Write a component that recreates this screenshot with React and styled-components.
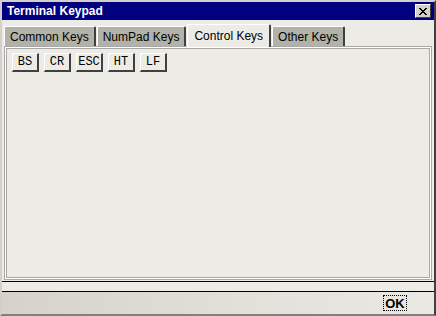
import React from 'react';
import styled, { createGlobalStyle } from 'styled-components';

const GlobalStyle = createGlobalStyle`
    html, body {
        margin: 0;
        padding: 0;
        background: #ECE9E3;
    }
    * {
        box-sizing: border-box;
    }
`;

const Frame = styled.div`
    width: 436px;
    height: 316px;
    display: flex;
    flex-direction: column;
    background: #ECEBE6;
    border-top: 2px solid #D4D0C8;
    border-left: 2px solid #D4D0C8;
    border-right: 2px solid #404040;
    border-bottom: 2px solid #808080;
    font-family: "Liberation Sans", Arial, sans-serif;
`;

const TitleBar = styled.div`
    height: 18px;
    flex: none;
    background: #000080;
    color: #fff;
    display: flex;
    align-items: center;
    justify-content: space-between;
    padding: 0 3px 0 5px;
    font-weight: bold;
    font-size: 12px;
`;

const CloseButton = styled.div`
    width: 16px;
    height: 14px;
    background: #D4D0C8;
    border-top: 1px solid #fff;
    border-left: 1px solid #fff;
    border-right: 1px solid #404040;
    border-bottom: 1px solid #404040;
    display: flex;
    align-items: center;
    justify-content: center;
`;

const Body = styled.div`
    flex: 1;
    display: flex;
    flex-direction: column;
    padding: 3px 2px 0 2px;
`;

const TabRow = styled.div`
    display: flex;
    align-items: flex-end;
    height: 23px;
    padding-left: 0;
    gap: 1px;
    flex: none;
`;

const Tab = styled.div`
    height: ${p => (p.$active ? '23px' : '20px')};
    margin-bottom: ${p => (p.$active ? '-1px' : '0')};
    padding: 0 ${p => (p.$active ? '6px' : '5px')};
    display: flex;
    align-items: center;
    font-size: 12px;
    color: #000;
    background: ${p => (p.$active ? '#ECEBE6' : '#B2B2A8')};
    border-top: 1px solid #fff;
    border-left: 1px solid #fff;
    border-right: 2px solid #404040;
    border-top-right-radius: 2px;
    position: relative;
    z-index: ${p => (p.$active ? 1 : 0)};
`;

const Panel = styled.div`
    flex: 1;
    border: 1px solid #A8A8A8;
    display: flex;
    padding: 1px;
    background: #fff;
`;

const PanelInner = styled.div`
    flex: 1;
    border: 1px solid #A8A8A8;
    background: #ECEBE6;
    display: flex;
    flex-direction: column;
    padding: 4px 3px;
`;

const KeyRow = styled.div`
    display: flex;
    gap: 5px;
    padding-left: 2px;
`;

const Key = styled.div`
    width: 27px;
    height: 19px;
    display: flex;
    align-items: center;
    justify-content: center;
    font-family: "Liberation Mono", "Courier New", monospace;
    font-size: 12px;
    color: #000;
    background: #ECEBE6;
    border-top: 1px solid #fff;
    border-left: 1px solid #fff;
    border-right: 2px solid #404040;
    border-bottom: 2px solid #404040;
`;

const Gap = styled.div`
    height: 11px;
    flex: none;
    margin: 1px -2px 0 -2px;
    border-top: 1px solid #000;
    border-bottom: 1px solid #000;
`;

const ButtonBar = styled.div`
    height: 22px;
    flex: none;
    margin: 0 -2px;
    display: flex;
    justify-content: flex-end;
    align-items: center;
    padding-right: 27px;
    background: linear-gradient(90deg, #D6D2C9 0%, #E3E1DA 60%, #E9E8E2 100%);
`;

const OkButton = styled.div`
    width: 24px;
    height: 16px;
    display: flex;
    align-items: center;
    justify-content: center;
    font-weight: bold;
    font-size: 13px;
    color: #000;
    border: 1px dotted #000;
`;

const keys = ['BS', 'CR', 'ESC', 'HT', 'LF'];
const tabs = ['Common Keys', 'NumPad Keys', 'Control Keys', 'Other Keys'];

export default function App() {
    return (
        <>
            <GlobalStyle />
            <Frame>
                <TitleBar>
                    <span>Terminal Keypad</span>
                    <CloseButton>
                        <svg width="8" height="7" viewBox="0 0 8 7">
                            <path d="M0 0 L7 7 M1 0 L8 7 M7 0 L0 7 M8 0 L1 7" stroke="#000" strokeWidth="1" />
                        </svg>
                    </CloseButton>
                </TitleBar>
                <Body>
                    <TabRow>
                        {tabs.map(t => (
                            <Tab key={t} $active={t === 'Control Keys'}>{t}</Tab>
                        ))}
                    </TabRow>
                    <Panel>
                        <PanelInner>
                            <KeyRow>
                                {keys.map(k => (
                                    <Key key={k}>{k}</Key>
                                ))}
                            </KeyRow>
                        </PanelInner>
                    </Panel>
                    <Gap />
                    <ButtonBar>
                        <OkButton>OK</OkButton>
                    </ButtonBar>
                </Body>
            </Frame>
        </>
    );
}
